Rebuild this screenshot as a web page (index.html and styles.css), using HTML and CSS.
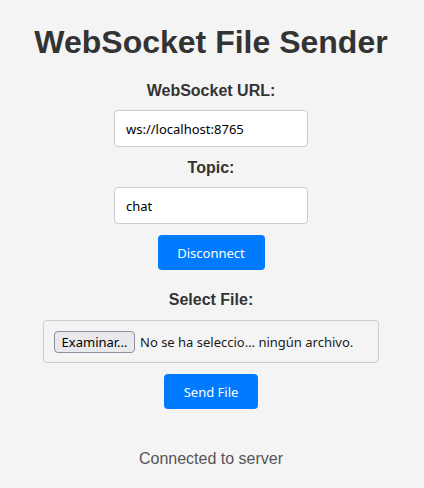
FILE: index.html
```html
<!DOCTYPE html>
<html lang="en">
<head>
<meta charset="utf-8">
<title>WebSocket File Sender</title>
<link rel="stylesheet" href="styles.css">
</head>
<body>
<main class="app">
  <h1 class="title">WebSocket File Sender</h1>
  <label class="label" for="url">WebSocket URL:</label>
  <input class="field" id="url" type="text" value="ws://localhost:8765">
  <label class="label" for="topic">Topic:</label>
  <input class="field field-last" id="topic" type="text" value="chat">
  <button class="btn btn-disconnect" type="button">Disconnect</button>
  <label class="label">Select File:</label>
  <div class="file-box">
    <button class="file-btn" type="button">Examinar…</button>
    <span class="file-name">No se ha seleccio… ningún archivo.</span>
  </div>
  <button class="btn btn-send" type="button">Send File</button>
  <p class="status">Connected to server</p>
</main>
</body>
</html>
```

FILE: styles.css
```css
html, body {
  margin: 0;
  padding: 0;
  background: #f4f4f4;
}
body {
  font-family: "Liberation Sans", Arial, sans-serif;
  color: #333;
}
.app {
  display: flex;
  flex-direction: column;
  align-items: center;
  padding: 8px 2px 8px 0;
}
.title {
  font-size: 32px;
  font-weight: bold;
  margin: 16px 0 21px;
  line-height: 37px;
}
.label {
  font-size: 16px;
  font-weight: bold;
  line-height: 18px;
  margin-bottom: 10px;
}
.field {
  box-sizing: border-box;
  width: 194px;
  height: 37px;
  padding: 0 11px;
  border: 1px solid #ccc;
  border-radius: 4px;
  background: #fff;
  font-family: "Noto Sans", sans-serif;
  font-size: 13px;
  color: #000;
  margin-bottom: 12px;
}
.field-last {
  margin-bottom: 11px;
}
.btn {
  box-sizing: border-box;
  height: 35px;
  border: 0;
  border-radius: 4px;
  background: #007bff;
  color: #fff;
  font-family: "Noto Sans", sans-serif;
  font-size: 13px;
  padding: 0;
}
.btn-disconnect {
  width: 107px;
  margin-bottom: 21px;
}
.btn-send {
  width: 94px;
  margin-top: 11px;
}
.file-box {
  box-sizing: border-box;
  width: 336px;
  height: 43px;
  margin-top: 1px;
  border: 1px solid #ccc;
  border-radius: 4px;
  display: flex;
  align-items: center;
  padding: 0 10px;
  gap: 5px;
  font-family: "Noto Sans", sans-serif;
  font-size: 13px;
  color: #1b1b1b;
}
.file-btn {
  box-sizing: border-box;
  width: 81px;
  height: 22px;
  padding: 0;
  border: 1px solid #8f8f9d;
  border-radius: 4px;
  background: #e9e9ed;
  font-family: "Noto Sans", sans-serif;
  font-size: 13px;
  color: #000;
}
.status {
  margin: 41px 0 0;
  font-size: 16px;
  color: #555;
}
```
